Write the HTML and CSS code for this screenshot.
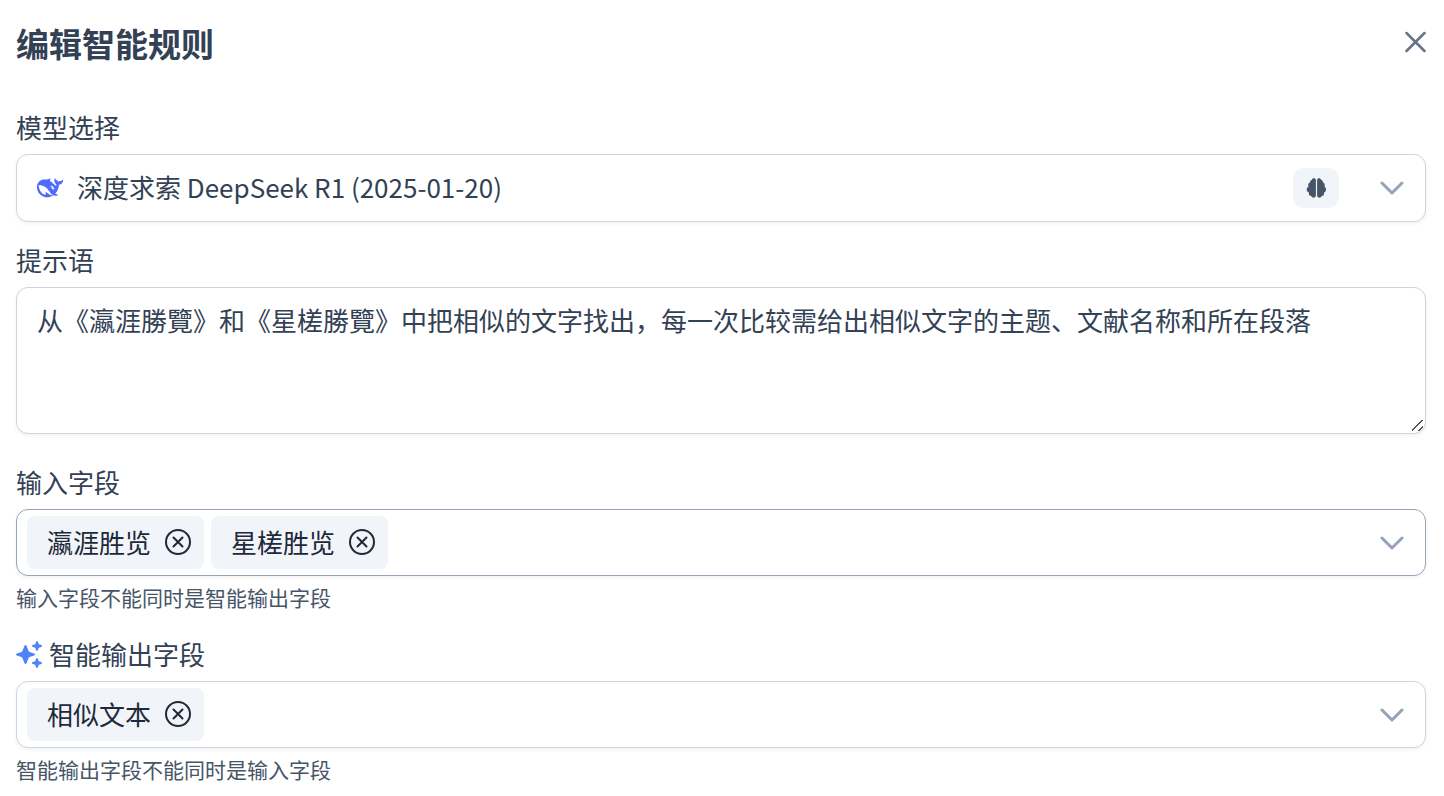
FILE: index.html
```html
<!DOCTYPE html>
<html lang="zh-CN">
<head>
<meta charset="utf-8">
<meta name="viewport" content="width=device-width, initial-scale=1">
<title>编辑智能规则</title>
<link rel="stylesheet" href="styles.css">
</head>
<body>
<svg class="sprite" aria-hidden="true">
  <symbol id="chevron" viewBox="0 0 24 16"><path d="M2 3 12 13 22 3" fill="none" stroke="currentColor" stroke-width="3" stroke-linecap="round" stroke-linejoin="round"/></symbol>
  <symbol id="circle-x" viewBox="0 0 28 28"><g fill="none" stroke="currentColor" stroke-width="2" stroke-linecap="round"><circle cx="14" cy="14" r="12"/><path d="M9.500 9.500l9 9M18.500 9.500l-9 9"/></g></symbol>
</svg>
<main class="dialog">
  <header class="dialog-header">
    <h1 class="dialog-title">编辑智能规则</h1>
    <button class="icon-button close" type="button" aria-label="关闭">
      <svg class="close-icon" viewBox="0 0 22 22"><path d="M2.500 2 20.500 20M20.500 2 2.500 20" fill="none" stroke="currentColor" stroke-width="2.500" stroke-linecap="round"/></svg>
    </button>
  </header>
  <form class="form">
    <div class="field">
      <label class="label" for="model">模型选择</label>
      <div class="control control-model">
        <svg class="model-logo" viewBox="0 0 24 24" aria-hidden="true"><path fill="currentColor" d="M23.748 4.482c-.254-.124-.364.113-.512.234-.051.039-.094.09-.137.136-.372.397-.806.657-1.373.626-.829-.046-1.537.214-2.163.848-.133-.782-.575-1.248-1.247-1.548-.352-.156-.708-.311-.955-.65-.172-.241-.219-.51-.305-.774-.055-.16-.11-.323-.293-.35-.2-.031-.278.136-.356.276-.313.572-.434 1.202-.422 1.84.027 1.436.633 2.58 1.838 3.393.137.093.172.187.129.323-.082.28-.18.552-.266.833-.055.179-.137.217-.329.14a5.526 5.526 0 01-1.736-1.18c-.857-.828-1.631-1.742-2.597-2.458a11.365 11.365 0 00-.689-.471c-.985-.957.13-1.743.388-1.836.27-.098.093-.432-.779-.428-.872.004-1.67.295-2.687.684a3.055 3.055 0 01-.465.137 9.597 9.597 0 00-2.883-.102c-1.885.21-3.39 1.102-4.497 2.623C.082 8.606-.231 10.684.152 12.85c.403 2.284 1.569 4.175 3.36 5.653 1.858 1.533 3.997 2.284 6.438 2.14 1.482-.085 3.133-.284 4.994-1.86.47.234.962.327 1.78.397.63.059 1.236-.03 1.705-.128.735-.156.684-.837.419-.961-2.155-1.004-1.682-.595-2.113-.926 1.096-1.296 2.746-2.642 3.392-7.003.05-.347.007-.565 0-.845-.004-.17.035-.237.23-.256a4.173 4.173 0 001.545-.475c1.396-.763 1.96-2.015 2.093-3.517.02-.23-.004-.467-.247-.588zM11.581 18c-2.089-1.642-3.102-2.183-3.52-2.16-.392.024-.321.471-.235.763.09.288.207.486.371.739.114.167.192.416-.113.603-.673.416-1.842-.14-1.897-.167-1.361-.802-2.5-1.86-3.301-3.307-.774-1.393-1.224-2.887-1.298-4.482-.02-.386.093-.522.477-.592a4.696 4.696 0 011.529-.039c2.132.312 3.946 1.265 5.468 2.774.868.86 1.525 1.887 2.202 2.891.72 1.066 1.494 2.082 2.48 2.914.348.292.625.514.891.677-.802.09-2.14.11-3.054-.614zm1-6.44a.306.306 0 01.415-.287.302.302 0 01.2.288.306.306 0 01-.31.307.303.303 0 01-.304-.308zm3.11 1.596c-.2.081-.399.151-.59.16a1.245 1.245 0 01-.798-.254c-.274-.23-.47-.358-.552-.758a1.73 1.73 0 01.016-.588c.07-.327-.008-.537-.239-.727-.187-.156-.426-.199-.688-.199a.559.559 0 01-.254-.078c-.11-.054-.2-.19-.114-.358.028-.054.16-.186.192-.21.356-.202.767-.136 1.146.016.352.144.618.408 1.001.782.391.451.462.576.685.914.176.265.336.537.445.848.067.195-.019.354-.25.452z"/></svg>
        <select class="model-select" id="model"><option>深度求索 DeepSeek R1 (2025-01-20)</option></select>
        <span class="badge">
          <svg class="brain-icon" viewBox="0 0 20 20" aria-hidden="true"><path fill="currentColor" d="M9.900 1.800V17.500C9.900 18.900 8.800 19.700 7.600 19.700 6.500 19.700 5.600 19.100 5.300 18 4 18 2.900 17 2.900 15.700 2.900 15.400 3 15.100 3.100 14.800 1.700 14.300 .7 13 .7 11.500 .7 10.100 1.500 8.900 2.600 8.400 2.300 8 2.200 7.500 2.200 7 2.200 5.800 3 4.800 4.100 4.600 4 4.400 4 4.200 4 3.900 4 2.800 4.800 2 5.800 1.900 6 .9 6.900 .2 7.900 .2 9 .2 9.900 .9 9.900 1.800ZM11.100 1.800C11.100 .9 12 .2 13.100 .2 14.100 .2 15 .9 15.200 1.900 16.200 2 17 2.800 17 3.900 17 4.200 17 4.400 16.900 4.600 18 4.800 18.800 5.800 18.800 7 18.800 7.500 18.700 8 18.400 8.400 19.500 8.900 20 10.100 20 11.500 20 13 19.300 14.300 17.900 14.800 18 15.100 18.100 15.400 18.100 15.700 18.100 17 17 18 15.700 18 15.400 19.100 14.500 19.700 13.400 19.700 12.200 19.700 11.100 18.900 11.100 17.500Z"/></svg>
        </span>
        <svg class="chevron" aria-hidden="true"><use href="#chevron"/></svg>
      </div>
    </div>
    <div class="field field-prompt">
      <label class="label" for="prompt">提示语</label>
      <textarea class="control prompt" id="prompt" spellcheck="false">从《瀛涯勝覽》和《星槎勝覽》中把相似的文字找出，每一次比较需给出相似文字的主题、文献名称和所在段落</textarea>
    </div>
    <div class="field field-input">
      <label class="label" for="input-toggle">输入字段</label>
      <div class="control control-chips is-hovered">
        <ul class="chips">
          <li class="chip">瀛涯胜览<button class="icon-button" type="button" aria-label="移除 瀛涯胜览"><svg class="chip-icon"><use href="#circle-x"/></svg></button></li>
          <li class="chip">星槎胜览<button class="icon-button" type="button" aria-label="移除 星槎胜览"><svg class="chip-icon"><use href="#circle-x"/></svg></button></li>
        </ul>
        <button class="icon-button" id="input-toggle" type="button"><svg class="chevron"><use href="#chevron"/></svg></button>
      </div>
      <p class="hint">输入字段不能同时是智能输出字段</p>
    </div>
    <div class="field">
      <label class="label" for="output-toggle">
        <svg class="sparkles" viewBox="0 0 27 27" aria-hidden="true"><path fill="currentColor" d="M9.500 4Q10.300 4 10.600 4.900L12.600 9.900Q12.900 10.600 13.600 10.900L18.200 12.500Q19 12.800 19 13.500T18.200 14.500L13.600 16.100Q12.900 16.400 12.600 17.100L10.600 22.100Q10.300 23 9.500 23T8.400 22.100L6.400 17.100Q6.100 16.400 5.400 16.100L.8 14.500Q0 14.200 0 13.500T.8 12.500L5.400 10.900Q6.100 10.600 6.400 9.900L8.400 4.900Q8.700 4 9.500 4Z"/><path id="small-star" fill="currentColor" d="M21 0Q21.700 0 21.900 .7L22.800 3.200 25.300 4.100Q26 4.300 26 5T25.300 5.900L22.800 6.800 21.900 9.300Q21.700 10 21 10T20.100 9.300L19.200 6.800 16.700 5.900Q16 5.700 16 5T16.700 4.100L19.200 3.200 20.100 .7Q20.300 0 21 0Z"/><use href="#small-star" y="17"/></svg>
        智能输出字段
      </label>
      <div class="control control-chips">
        <ul class="chips">
          <li class="chip">相似文本<button class="icon-button" type="button" aria-label="移除 相似文本"><svg class="chip-icon"><use href="#circle-x"/></svg></button></li>
        </ul>
        <button class="icon-button" id="output-toggle" type="button"><svg class="chevron"><use href="#chevron"/></svg></button>
      </div>
      <p class="hint">智能输出字段不能同时是输入字段</p>
    </div>
  </form>
</main>
</body>
</html>
```
FILE: styles.css
```css
* { box-sizing: border-box; }

body {
  margin: 0;
  background: #fff;
  color: #334155;
  font-family: "Noto Sans CJK SC", sans-serif;
  font-size: 26px;
  line-height: 38px;
}

svg { display: block; flex: none; }
.sprite { display: none; }

.dialog { padding: 20px 18px 8px 16px; }

.dialog-header {
  display: flex;
  align-items: flex-start;
  justify-content: space-between;
  margin-bottom: 42px;
}

.dialog-title {
  margin: 0;
  font-size: 33px;
  line-height: 47px;
  font-weight: 700;
}

.icon-button {
  display: flex;
  padding: 0;
  border: 0;
  background: none;
  color: inherit;
  cursor: pointer;
}

.close { padding-top: 11px; color: #64748b; }
.close-icon { width: 22px; height: 22px; }

.form { display: flex; flex-direction: column; }
.field { display: flex; flex-direction: column; margin-bottom: 20px; }
.field:last-child { margin-bottom: 0; }
.field-prompt { margin-bottom: 30px; }
.field-input { margin-bottom: 25px; }

.label {
  display: flex;
  align-items: center;
  gap: 6px;
  margin-bottom: 9px;
  line-height: 36px;
}

.sparkles { width: 27px; height: 27px; color: #4f83f7; }

.control {
  border: 1px solid #cbd5e1;
  border-radius: 12px;
  background: #fff;
  box-shadow: 0 2px 4px rgba(18, 18, 23, 0.05);
}

.control-model {
  display: flex;
  align-items: center;
  padding: 13px 21px 13px 20px;
}

.model-logo { width: 26px; height: 26px; color: #4d6bfe; }

.model-select {
  flex: 1;
  min-width: 0;
  height: 40px;
  margin: 0 14px;
  padding: 0 0 2px;
  border: 0;
  outline: 0;
  appearance: none;
  background: none;
  color: inherit;
  font: inherit;
}

.badge {
  display: flex;
  align-items: center;
  justify-content: center;
  width: 46px;
  height: 40px;
  margin-right: 41px;
  border-radius: 11px;
  background: #f1f5f9;
  color: #475569;
}

.brain-icon { width: 20px; height: 20px; }
.chevron { width: 24px; height: 16px; color: #94a3b8; }

.prompt {
  display: block;
  width: 100%;
  height: 147px;
  padding: 13px 20px;
  outline: 0;
  resize: vertical;
  color: inherit;
  font: inherit;
}

.prompt::-webkit-resizer {
  background: linear-gradient(135deg, transparent 44%, #555 44%, #555 54%, transparent 54%, transparent 74%, #555 74%, #555 84%, transparent 84%) 2px 2px / 11px 11px no-repeat;
}

.control-chips {
  display: flex;
  align-items: center;
  justify-content: space-between;
  padding: 6px 21px 6px 10px;
}

.is-hovered { border-color: #94a3b8; }

.chips {
  display: flex;
  flex-wrap: wrap;
  gap: 7px;
  margin: 0;
  padding: 0;
  list-style: none;
}

.chip {
  display: flex;
  align-items: center;
  gap: 13px;
  padding: 7px 12px 8px 20px;
  border-radius: 8px;
  background: #f1f5f9;
  color: #1e293b;
}

.chip-icon { width: 28px; height: 28px; }

.hint {
  margin: 7px 0 0;
  color: #475569;
  font-size: 21px;
  line-height: 28px;
}
```
